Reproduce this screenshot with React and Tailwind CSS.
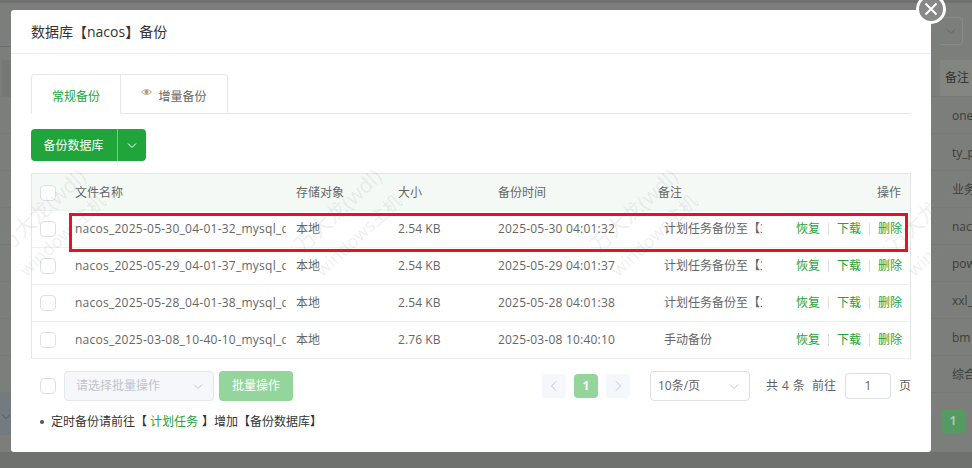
import React from 'react';

const FONT = "font-['Open_Sans','Noto_Sans_CJK_SC',sans-serif]";

const bgRows = ['one', 'ty_p', '业务', 'nac', 'pow', 'xxl_', 'bm', '综合'];

const files = [
    { name: 'nacos_2025-05-30_04-01-32_mysql_data_migration.sql.gz', size: '2.54 KB', time: '2025-05-30 04:01:32', note: '计划任务备份至【3' },
    { name: 'nacos_2025-05-29_04-01-37_mysql_data_migration.sql.gz', size: '2.54 KB', time: '2025-05-29 04:01:37', note: '计划任务备份至【3' },
    { name: 'nacos_2025-05-28_04-01-38_mysql_data_migration.sql.gz', size: '2.54 KB', time: '2025-05-28 04:01:38', note: '计划任务备份至【3' },
    { name: 'nacos_2025-03-08_10-40-10_mysql_data_migration.sql.gz', size: '2.76 KB', time: '2025-03-08 10:40:10', note: '手动备份' },
];

const Chevron = ({ className, dir = 'down' }) => {
    const d = {
        down: 'M2 4.5 L6 8.5 L10 4.5',
        left: 'M8 1.5 L3.5 6 L8 10.5',
        right: 'M4 1.5 L8.5 6 L4 10.5',
    }[dir];
    return (
        <svg viewBox="0 0 12 12" className={ className } fill="none" stroke="currentColor" strokeWidth="1">
            <path d={ d } />
        </svg>
    );
};

const Check = () => (
    <div className="w-4 h-4 shrink-0 rounded-sm border border-[#dcdfe6] bg-white" />
);

const Watermark = () => (
    <div className="absolute inset-0 pointer-events-none overflow-hidden flex pl-[1px] pt-[158px]">
        { [...Array(4)].map((_, i) => (
            <div key={ i } className="relative w-[296px] h-[120px] shrink-0">
                <div className="absolute left-[-14px] top-[42px] whitespace-nowrap text-[21px] leading-none text-[#8a8a8a]/15 -rotate-[43deg]">万大龙(wdl)</div>
                <div className="absolute left-[6px] top-[68px] whitespace-nowrap text-[18px] leading-none text-[#8a8a8a]/15 -rotate-[43deg]">windows主机</div>
            </div>
        )) }
    </div>
);

const App = () => {
    return (
        <div className={ `relative w-[972px] h-[468px] overflow-hidden bg-[#7b7e7a] text-xs ${ FONT }` }>
            {/* Page behind the dialog */ }
            <div className="h-[3px] bg-[#6f716e]" />
            <div className="h-[57px] flex justify-between items-start">
                <div className="w-[11px] h-[44px] border-b border-[#6a6e70]" />
                <div className="mt-[14px] mr-[9px] w-[23px] h-[28px] rounded-r border border-l-0 border-[#868b8c] flex items-center justify-center text-[#60635f]">
                    <Chevron className="w-3 h-3" />
                </div>
            </div>
            <div className="h-[37px] flex justify-between border-b border-[#767976]">
                <div className="w-[10px] ml-[2px] bg-[#757873]" />
                <div className="w-[32px] bg-[#838580] flex items-center pl-[5px] text-[#333] whitespace-nowrap overflow-hidden">备注</div>
            </div>
            { bgRows.map((t) => (
                <div key={ t } className="h-[37px] pt-[2px] border-b border-[#767976] flex justify-end items-center text-[#3d3f3d] overflow-hidden">
                    <div className="w-[20px] whitespace-nowrap overflow-hidden">{ t }</div>
                </div>
            )) }
            <div className="h-[42px] flex justify-between">
                <div className="w-[11px] bg-[#737a80] flex items-center justify-center pt-1 text-[#565a5e]">
                    <Chevron className="w-3 h-3 shrink-0" />
                </div>
                <div className="mt-[16px] mr-[7px] w-6 h-6 rounded-sm bg-[#559a62] text-[#a9c4a8] font-bold flex items-center justify-center">1</div>
            </div>
            <div className="mt-[17px] h-4 bg-[#6f716e]" />

            {/* Dialog */ }
            <div className="absolute left-[11px] top-[10px] w-[920px] h-[442px] bg-white rounded-[3px] flex flex-col">
                <div className="h-[44px] shrink-0 border-b border-[#eeeeee] pl-5 flex items-center text-sm text-[#333]">
                    数据库【nacos】备份
                </div>
                <div className="px-5 pt-5 flex flex-col">
                    <div className="h-[40px] flex border-b border-[#e6e6e6]">
                        <div className="w-[90px] h-[40px] pt-1.5 border border-[#e6e6e6] border-b-white rounded-tl bg-white text-[#20a53a] flex items-center justify-center">常规备份</div>
                        <div className="w-[107px] h-[39px] pt-1.5 border border-l-0 border-b-0 border-[#e6e6e6] rounded-tr text-[#666] flex items-center justify-center gap-1.5">
                            <svg viewBox="0 0 12 10" className="w-[11px] h-[9px] mb-[10px] text-[#a8946c]" fill="none" stroke="currentColor" strokeWidth="1">
                                <path d="M0.5 4.5 C3 1 9 1 11.5 4.5 C9 8 3 8 0.5 4.5 Z" />
                                <circle cx="6" cy="4.5" r="1.6" fill="currentColor" />
                            </svg>
                            增量备份
                        </div>
                    </div>
                    <div className="mt-[15px] w-[115px] h-8 flex rounded bg-[#20a53a] text-white">
                        <div className="w-[87px] pt-px pr-px border-r border-[#79c989] flex items-center justify-center">备份数据库</div>
                        <div className="flex-1 flex items-center justify-center">
                            <Chevron className="w-3 h-3" />
                        </div>
                    </div>

                    {/* Table */ }
                    <div className="mt-3 border-l border-r border-t border-[#e3e6e3]">
                        <div className="h-[36px] pt-[2px] flex items-center bg-[#f5f9f6] text-[#666]">
                            <div className="w-[43px] pl-2 shrink-0"><Check /></div>
                            <div className="w-[221px] shrink-0">文件名称</div>
                            <div className="w-[102px] shrink-0">存储对象</div>
                            <div className="w-[100px] shrink-0">大小</div>
                            <div className="w-[160px] shrink-0">备份时间</div>
                            <div className="flex-1">备注</div>
                            <div className="pr-[9px]">操作</div>
                        </div>
                        { files.map((f) => (
                            <div key={ f.time } className="h-[37px] flex items-center border-t border-[#eef0f4] text-[#666]">
                                <div className="w-[43px] pl-2 shrink-0"><Check /></div>
                                <div className="w-[221px] shrink-0">
                                    <div className="w-[211px] whitespace-nowrap overflow-hidden tracking-[0.25px]">{ f.name }</div>
                                </div>
                                <div className="w-[102px] shrink-0">本地</div>
                                <div className="w-[100px] shrink-0 tracking-[0.1px]">{ f.size }</div>
                                <div className="w-[160px] shrink-0 tracking-[0.2px]">{ f.time }</div>
                                <div className="w-[104px] pl-1.5 shrink-0">
                                    <div className="w-[98px] whitespace-nowrap overflow-hidden">{ f.note }</div>
                                </div>
                                <div className="flex-1 flex justify-end items-center pr-2 text-[#20a53a]">
                                    <span>恢复</span>
                                    <span className="w-px h-3 bg-[#dddddd] mx-2" />
                                    <span>下载</span>
                                    <span className="w-px h-3 bg-[#dddddd] mx-2" />
                                    <span>删除</span>
                                </div>
                            </div>
                        )) }
                        <div className="border-t border-[#eef0f4]" />
                    </div>

                    {/* Batch and pagination */ }
                    <div className="mt-[12px] h-[30px] flex items-center">
                        <div className="ml-[9px] mr-2"><Check /></div>
                        <div className="w-[150px] h-[30px] rounded border border-[#e4e7ed] bg-[#f5f7fa] text-[#c0c4cc] flex items-center justify-between pl-[11px] pr-[9px]">
                            请选择批量操作
                            <Chevron className="w-3 h-3" />
                        </div>
                        <div className="ml-[5px] w-[74px] h-[30px] rounded bg-[#94d59b] text-white flex items-center justify-center">批量操作</div>
                        <div className="ml-[249px] w-6 h-6 rounded-sm bg-[#f4f7fb] text-[#c0c4cc] flex items-center justify-center">
                            <Chevron className="w-3 h-3" dir="left" />
                        </div>
                        <div className="ml-2 w-6 h-6 rounded-sm bg-[#94d59b] text-white font-bold flex items-center justify-center">1</div>
                        <div className="ml-2 w-6 h-6 rounded-sm bg-[#f4f7fb] text-[#c0c4cc] flex items-center justify-center">
                            <Chevron className="w-3 h-3" dir="right" />
                        </div>
                        <div className="ml-5 w-[100px] h-[30px] rounded border border-[#dcdfe6] text-[#606266] flex items-center justify-between pl-[7px] pr-[9px]">
                            10条/页
                            <Chevron className="w-3 h-3 text-[#c0c4cc]" />
                        </div>
                        <div className="ml-4 w-[39px] text-[#606266] whitespace-nowrap tracking-[0.4px]">共 4 条</div>
                        <div className="ml-[7px] text-[#606266] whitespace-nowrap">前往</div>
                        <div className="ml-[9px] w-[46px] h-[26px] rounded border border-[#dcdfe6] text-[#606266] flex items-center justify-center">1</div>
                        <div className="ml-2 text-[#606266]">页</div>
                    </div>
                    <div className="mt-3 pl-[9px] flex items-center h-[17px] text-[#333]">
                        <span className="w-1 h-1 rounded-full bg-[#555] mr-[7px]" />
                        定时备份请前往【
                        <span className="text-[#20a53a] ml-[3px] mr-[3px]">计划任务</span>
                        <span className="ml-[1px]">】增加【备份数据库】</span>
                    </div>
                </div>
            </div>

            <Watermark />

            {/* Red highlight drawn over the first row */ }
            <div className="absolute left-[69px] top-[213px] w-[839px] h-[39px] border-[3px] border-[#e81123] pointer-events-none" />

            {/* Close button */ }
            <div className="absolute left-[916px] top-[-6px] w-[30px] h-[30px] rounded-full bg-[#888888] border-[3px] border-white flex items-center justify-center">
                <svg viewBox="0 0 14 14" className="w-[14px] h-[14px] text-white" fill="none" stroke="currentColor" strokeWidth="2">
                    <path d="M1.5 1.5 L12.5 12.5 M12.5 1.5 L1.5 12.5" />
                </svg>
            </div>
        </div>
    );
};

export default App;
